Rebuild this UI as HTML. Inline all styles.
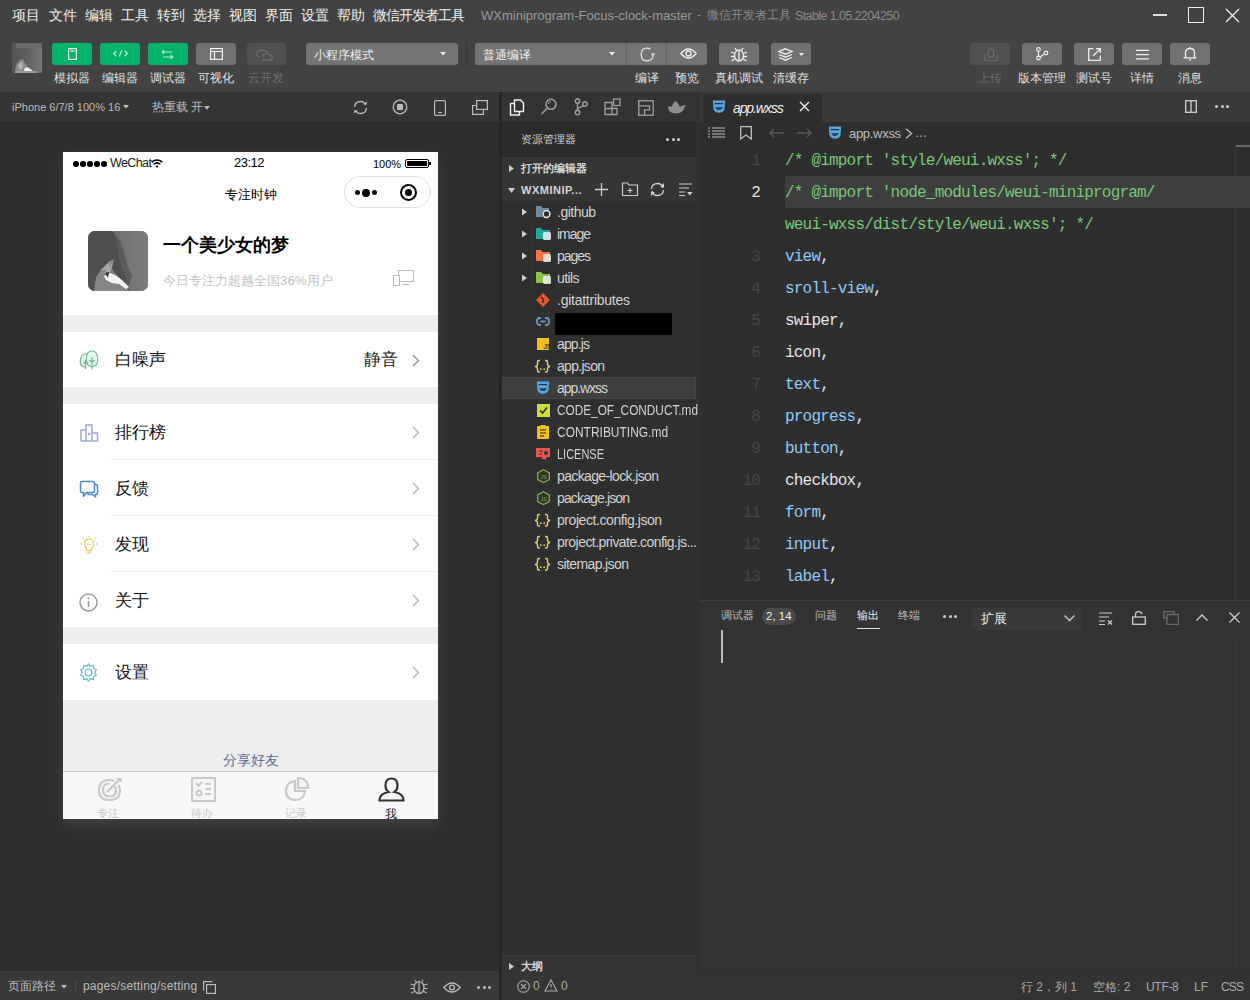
<!DOCTYPE html>
<html><head><meta charset="utf-8">
<style>
*{box-sizing:border-box;margin:0;padding:0}
html,body{width:1250px;height:1000px;overflow:hidden;background:#2f2f2f;font-family:"Liberation Sans",sans-serif}
.a{position:absolute}
.t{position:absolute;white-space:nowrap;line-height:1}
svg{position:absolute;overflow:visible}
#top{left:0;top:0;width:1250px;height:92px;background:#424242}
.menu{top:8px;font-size:14px;color:#f0f0f0}
.btn{top:43px;width:40px;height:22px;border-radius:3px}
.g{background:#04b36a}
.gr{background:#717171}
.dis{background:#505050}
.lbl{top:72px;font-size:12px;color:#e0e0e0;text-align:center;width:60px}
#simbar{left:0;top:92px;width:500px;height:30px;background:#353535}
#sim{left:0;top:122px;width:500px;height:849px;background:#2e2e2e;border-top:2px solid #2a2a2a}
#simstat{left:0;top:971px;width:500px;height:29px;background:#393939}
#divider{left:499px;top:92px;width:3px;height:909px;background:#262626}
#act{left:502px;top:92px;width:198px;height:29px;background:#333}
#exp{left:502px;top:121px;width:198px;height:849px;background:#2f2f2f}
#tabs{left:700px;top:92px;width:550px;height:30px;background:#393939}
#editor{left:700px;top:122px;width:550px;height:478px;background:#2e2e2e}
#panel{left:700px;top:600px;width:550px;height:370px;background:#333}
#stat{left:502px;top:971px;width:748px;height:29px;background:#333}
.phone{left:63px;top:152px;width:375px;height:667px;background:#fff;overflow:hidden;box-shadow:0 6px 14px rgba(85,85,85,0.5)}
</style></head><body>
<div id="top" class="a"></div>
<!-- menu -->
<div class="t menu" style="left:12px">项目</div>
<div class="t menu" style="left:49px">文件</div>
<div class="t menu" style="left:85px">编辑</div>
<div class="t menu" style="left:121px">工具</div>
<div class="t menu" style="left:157px">转到</div>
<div class="t menu" style="left:193px">选择</div>
<div class="t menu" style="left:229px">视图</div>
<div class="t menu" style="left:265px">界面</div>
<div class="t menu" style="left:301px">设置</div>
<div class="t menu" style="left:337px">帮助</div>
<div class="t menu" style="left:373px;letter-spacing:-1px">微信开发者工具</div>
<div class="t" style="left:481px;top:9px;font-size:13px;color:#9a9a9a">WXminiprogram-Focus-clock-master</div>
<div class="t" style="left:697px;top:9px;font-size:12px;color:#8a8a8a">-</div>
<div class="t" style="left:707px;top:9px;font-size:12px;color:#8a8a8a">微信开发者工具</div>
<div class="t" style="left:795px;top:10px;font-size:12.5px;letter-spacing:-0.6px;color:#8a8a8a">Stable 1.05.2204250</div>
<!-- window controls -->
<div class="a" style="left:1153px;top:14px;width:14px;height:1.5px;background:#ddd"></div>
<div class="a" style="left:1188px;top:7px;width:16px;height:16px;border:1.5px solid #eee"></div>
<svg style="left:1226px;top:9px" width="13" height="13"><path d="M0 0L13 13M13 0L0 13" stroke="#eee" stroke-width="1.3"/></svg>

<!-- toolbar -->
<div class="a" style="left:12px;top:43px;width:30px;height:30px;border-radius:2px;overflow:hidden;background:linear-gradient(90deg,#565656 0%,#5c5c5c 40%,#787878 100%)">
 <svg style="left:0;top:0;filter:blur(0.7px)" width="30" height="30"><rect x="4" y="0" width="26" height="5" fill="#6a6a6a"/><path d="M3 30L4 22L8 17L11 16L13 20L16 25L20 30Z" fill="#8a8a8a"/><path d="M6 22L10 18L11 24L8 27Z" fill="#b5b5b5"/><path d="M12 26L15 24L20 27L22 30H13Z" fill="#f0f0f0"/><path d="M3 28H25V30H3Z" fill="#9a9a9a"/></svg>
</div>
<div class="a btn g" style="left:52px"></div>
<div class="a btn g" style="left:100px"></div>
<div class="a btn g" style="left:148px"></div>
<div class="a btn gr" style="left:196px"></div>
<div class="a btn dis" style="left:247px;width:39px"></div>
<svg style="left:68px;top:48px" width="9" height="12"><rect x="0.6" y="0.6" width="7.8" height="10.8" fill="none" stroke="#eafff2" stroke-width="1.2"/><path d="M2.5 3H6.5" stroke="#eafff2" stroke-width="1.2"/></svg>
<svg style="left:113px;top:50px" width="15" height="7"><g fill="none" stroke="#bfe9d0" stroke-width="1.3"><path d="M3.2 0.8L0.8 3.5L3.2 6.2M11.8 0.8L14.2 3.5L11.8 6.2M8.8 0.4L6.2 6.6"/></g></svg>
<svg style="left:161px;top:50px" width="13" height="9"><g fill="none" stroke="#bfe9d0" stroke-width="1.2"><path d="M1.5 2H11M3.3 0.3L1.3 2L3.3 3.7"/><path d="M2 7H11.5M9.7 5.3L11.7 7L9.7 8.7"/></g></svg>
<svg style="left:210px;top:48px" width="13" height="12"><g fill="none" stroke="#f4f4f4" stroke-width="1.2"><rect x="0.6" y="0.6" width="11.8" height="10.8"/><path d="M0.6 3.5H12.4M4.5 3.5V11.4"/></g></svg>
<svg style="left:256px;top:49px" width="17" height="12"><g fill="none" stroke="#6a6a6a" stroke-width="1.3"><path d="M4 8Q0.7 8 0.7 5Q0.7 1 5 1.5Q7 0.3 9 2Q12 2 12 5"/><path d="M6 11H14Q16.3 11 16.3 8.5Q16.3 6 13.5 6Q12 4 9.5 5Q7 5 7 8"/></g></svg>
<div class="t lbl" style="left:42px">模拟器</div>
<div class="t lbl" style="left:90px">编辑器</div>
<div class="t lbl" style="left:138px">调试器</div>
<div class="t lbl" style="left:186px">可视化</div>
<div class="t lbl" style="left:236px;color:#6e6e6e">云开发</div>

<div class="a" style="left:306px;top:43px;width:152px;height:22px;background:#747474;border-radius:3px"></div>
<div class="t" style="left:314px;top:49px;font-size:12px;color:#f0f0f0">小程序模式</div>
<svg style="left:440px;top:52px" width="6" height="4"><path d="M0 0H6L3 3.5Z" fill="#eee"/></svg>
<div class="a" style="left:466px;top:43px;width:1px;height:22px;background:#353535"></div>
<div class="a" style="left:475px;top:43px;width:232px;height:22px;background:#747474;border-radius:3px"></div>
<div class="a" style="left:626px;top:43px;width:1px;height:22px;background:#646464"></div>
<div class="a" style="left:666px;top:43px;width:1px;height:22px;background:#646464"></div>
<div class="t" style="left:483px;top:49px;font-size:12px;color:#f0f0f0">普通编译</div>
<svg style="left:609px;top:52px" width="6" height="4"><path d="M0 0H6L3 3.5Z" fill="#eee"/></svg>
<svg style="left:640px;top:47px" width="16" height="15"><path d="M10.5 2.2Q9 1.2 7 1.2Q1.2 1.2 1.2 7.5Q1.2 13.8 7 13.8Q12.5 13.8 13 8.5" fill="none" stroke="#dcdcdc" stroke-width="1.4"/><path d="M10.5 6.5L13 9.5L15.5 6.5Z" fill="#dcdcdc"/></svg>
<svg style="left:680px;top:48px" width="17" height="11"><g fill="none" stroke="#f0f0f0" stroke-width="1.3"><path d="M0.8 5.5Q8.5 -3.5 16.2 5.5Q8.5 14.5 0.8 5.5Z"/><circle cx="8.5" cy="5.5" r="2.5"/></g></svg>
<div class="a btn gr" style="left:719px;width:40px"></div>
<div class="a btn gr" style="left:771px;width:40px"></div>
<svg style="left:730px;top:47px" width="18" height="15"><g fill="none" stroke="#f0f0f0" stroke-width="1.3"><ellipse cx="9" cy="8.5" rx="4.5" ry="5.5"/><path d="M9 4V14M6.5 3.5L5 1M11.5 3.5L13 1M4.5 6.5L1 5M13.5 6.5L17 5M4.5 9.5H1M13.5 9.5H17M4.8 12L1.5 14M13.2 12L16.5 14"/></g></svg>
<svg style="left:778px;top:48px" width="27" height="13"><g fill="none" stroke="#f0f0f0" stroke-width="1.3"><path d="M7.5 0.8L14 3.5L7.5 6.2L1 3.5Z"/><path d="M1 6.5L7.5 9.2L14 6.5M1 9.5L7.5 12.2L14 9.5"/></g><path d="M21 5H26L23.5 8Z" fill="#f0f0f0"/></svg>
<div class="t lbl" style="left:617px">编译</div>
<div class="t lbl" style="left:657px">预览</div>
<div class="t lbl" style="left:709px">真机调试</div>
<div class="t lbl" style="left:761px">清缓存</div>

<div class="a btn dis" style="left:970px"></div>
<div class="a btn gr" style="left:1022px"></div>
<div class="a btn gr" style="left:1074px"></div>
<div class="a btn gr" style="left:1122px"></div>
<div class="a btn gr" style="left:1170px"></div>
<svg style="left:984px;top:48px" width="14" height="13"><g fill="none" stroke="#6a6a6a" stroke-width="1.3"><path d="M4.5 3.5Q4.5 0.8 7 0.8Q9.5 0.8 9.5 3.5V9H4.5Z"/><path d="M0.7 7V12.3H13.3V7"/></g></svg>
<svg style="left:1036px;top:47px" width="13" height="14"><g fill="none" stroke="#f0f0f0" stroke-width="1.2"><circle cx="2.5" cy="2.5" r="1.8"/><circle cx="2.5" cy="11" r="1.8"/><circle cx="10" cy="6" r="1.8"/><path d="M2.5 4.3V9.2M4.2 10L8.3 7"/></g></svg>
<svg style="left:1088px;top:48px" width="13" height="13"><g fill="none" stroke="#f0f0f0" stroke-width="1.3"><path d="M5.5 0.7H0.7V12.3H12.3V7.5"/><path d="M5 8L12 1M8 0.7H12.3V5"/></g></svg>
<svg style="left:1136px;top:49px" width="13" height="11"><g stroke="#f0f0f0" stroke-width="1.3"><path d="M0 1.4H13M0 5.6H13M0 9.8H13"/></g></svg>
<svg style="left:1183px;top:46px" width="14" height="15"><g fill="none" stroke="#f0f0f0" stroke-width="1.3"><path d="M7 1V2.5M2.5 11.5V7Q2.5 2.5 7 2.5Q11.5 2.5 11.5 7V11.5M0.5 11.8H13.5M5.8 13.8H8.2"/></g></svg>
<div class="t lbl" style="left:960px;color:#6e6e6e">上传</div>
<div class="t lbl" style="left:1012px">版本管理</div>
<div class="t lbl" style="left:1064px">测试号</div>
<div class="t lbl" style="left:1112px">详情</div>
<div class="t lbl" style="left:1160px">消息</div>

<!-- simulator -->
<div id="simbar" class="a"></div>
<div id="sim" class="a"></div>
<div id="simstat" class="a"></div>
<div class="t" style="left:12px;top:102px;font-size:11px;color:#bdbdbd">iPhone 6/7/8 100% 16</div>
<svg style="left:123px;top:105px" width="6" height="4"><path d="M0 0H6L3 3.5Z" fill="#bdbdbd"/></svg>
<div class="t" style="left:152px;top:101px;font-size:12px;color:#bdbdbd">热重载 开</div>
<svg style="left:204px;top:106px" width="6" height="4"><path d="M0 0H6L3 3.5Z" fill="#bdbdbd"/></svg>
<svg style="left:353px;top:100px" width="15" height="15"><g fill="none" stroke="#bbb" stroke-width="1.3"><path d="M12.5 5Q11 1.5 7.5 1.5Q2 1.5 1.6 7"/><path d="M2.5 10Q4 13.5 7.5 13.5Q13 13.5 13.4 8"/></g><path d="M10.5 4.5H13.8V1.2Z M4.5 10.5H1.2V13.8Z" fill="#bbb"/></svg>
<svg style="left:392px;top:99px" width="16" height="16"><circle cx="8" cy="8" r="6.8" fill="none" stroke="#bbb" stroke-width="1.3"/><rect x="5" y="5" width="6" height="6" rx="1" fill="#bbb"/></svg>
<svg style="left:434px;top:100px" width="12" height="16"><g fill="none" stroke="#bbb" stroke-width="1.2"><rect x="0.6" y="0.6" width="10.8" height="14.8" rx="1"/><path d="M4 12.5H8"/></g></svg>
<svg style="left:472px;top:100px" width="16" height="15"><g fill="none" stroke="#bbb" stroke-width="1.2"><rect x="4.6" y="0.6" width="10.8" height="8.8"/><path d="M4.6 5.5H0.6V14.4H11.4V9.4"/></g></svg>

<div class="a phone">
 <!-- status bar -->
 <div class="a" style="left:10px;top:9px;width:5.5px;height:5.5px;border-radius:50%;background:#000"></div>
 <div class="a" style="left:17px;top:9px;width:5.5px;height:5.5px;border-radius:50%;background:#000"></div>
 <div class="a" style="left:24px;top:9px;width:5.5px;height:5.5px;border-radius:50%;background:#000"></div>
 <div class="a" style="left:31px;top:9px;width:5.5px;height:5.5px;border-radius:50%;background:#000"></div>
 <div class="a" style="left:38px;top:9px;width:5.5px;height:5.5px;border-radius:50%;background:#000"></div>
 <div class="t" style="left:47px;top:5px;font-size:12.5px;letter-spacing:-0.6px;color:#222">WeChat</div>
 <svg style="left:88px;top:7px" width="12" height="9"><path d="M0.6 3.2Q6 -1.2 11.4 3.2" stroke="#000" stroke-width="1.5" fill="none"/><path d="M2.6 5.3Q6 2.4 9.4 5.3" stroke="#000" stroke-width="1.5" fill="none"/><path d="M4.4 7L6 8.8L7.6 7Q6 5.8 4.4 7Z" fill="#000"/></svg>
 <div class="t" style="left:171px;top:4px;font-size:13px;letter-spacing:-0.5px;color:#000">23:12</div>
 <div class="t" style="left:310px;top:7px;font-size:11px;color:#000">100%</div>
 <div class="a" style="left:342px;top:7px;width:24px;height:9px;border:1px solid #000;border-radius:2px;padding:1px"><div style="width:100%;height:100%;background:#000"></div></div>
 <div class="a" style="left:366px;top:10px;width:2px;height:3px;background:#000"></div>
 <!-- nav -->
 <div class="t" style="left:0;width:375px;text-align:center;top:36px;font-size:13px;color:#000">专注时钟</div>
 <div class="a" style="left:281px;top:24px;width:87px;height:32px;border:1px solid #e0e0e0;border-radius:16px"></div>
 <div class="a" style="left:291.5px;top:38.2px;width:5px;height:5px;border-radius:50%;background:#000"></div>
 <div class="a" style="left:298.5px;top:36.7px;width:8px;height:8px;border-radius:50%;background:#000"></div>
 <div class="a" style="left:309px;top:38.2px;width:5px;height:5px;border-radius:50%;background:#000"></div>
 <div class="a" style="left:337px;top:32px;width:17px;height:17px;border-radius:50%;border:2px solid #000"></div>
 <div class="a" style="left:342px;top:37px;width:7px;height:7px;border-radius:50%;background:#000"></div>
 <!-- profile -->
 <div class="a" style="left:25px;top:79px;width:60px;height:60px;border-radius:7px;overflow:hidden;background:#707070">
  <svg style="left:0;top:0;filter:blur(0.6px)" width="60" height="60">
   <defs><linearGradient id="av1" x1="0" y1="0" x2="1" y2="0"><stop offset="0" stop-color="#666"/><stop offset="1" stop-color="#7c7c7c"/></linearGradient></defs>
   <rect width="60" height="60" fill="url(#av1)"/>
   <path d="M0 0H24Q30 6 31 18Q33 30 38 40Q42 50 40 60H0Z" fill="#4f4f4f"/>
   <path d="M24 0Q34 8 36 20Q38 34 44 44L40 60H38Q40 48 34 38Q30 28 30 16Q28 6 24 0Z" fill="#5c5c5c"/>
   <path d="M6 60L8 46L14 38L22 30L26 28L24 38L30 46L40 58V60Z" fill="#868686"/>
   <path d="M12 40L22 30L20 38Z M16 42L25 31L22 41Z" fill="#a8a8a8"/>
   <path d="M16 45L22 42L29 45L35 50L41 56L38 58L31 53L24 52L18 49Z" fill="#f4f4f4"/>
   <path d="M17 42L21 41L20 47Z" fill="#333"/>
  </svg>
 </div>
 <div class="t" style="left:100px;top:84px;font-size:18px;font-weight:bold;color:#000">一个美少女的梦</div>
 <div class="t" style="left:100px;top:122px;font-size:13.3px;color:#c4c4c4">今日专注力超越全国36%用户</div>
 <svg style="left:330px;top:118px" width="21" height="16"><rect x="5.5" y="0.5" width="15" height="11" fill="none" stroke="#bbb"/><rect x="0.5" y="5.5" width="6" height="10" fill="#fff" stroke="#bbb"/><path d="M9 14.5H16" stroke="#bbb"/></svg>
 <!-- bands -->
 <div class="a" style="left:0;top:163px;width:375px;height:17px;background:#ededed"></div>
 <div class="a" style="left:0;top:235px;width:375px;height:17px;background:#ededed"></div>
 <div class="a" style="left:48px;top:307px;width:327px;height:1px;background:#f0f0f0"></div>
 <div class="a" style="left:48px;top:363px;width:327px;height:1px;background:#f0f0f0"></div>
 <div class="a" style="left:48px;top:419px;width:327px;height:1px;background:#f0f0f0"></div>
 <div class="a" style="left:0;top:475px;width:375px;height:17px;background:#ededed"></div>
 <div class="a" style="left:0;top:548px;width:375px;height:71px;background:#ededed"></div>
 <!-- rows -->
 <div class="t" style="left:52px;top:199px;font-size:17px;color:#111">白噪声</div>
 <div class="t" style="left:301px;top:199px;font-size:17px;color:#222">静音</div>
 <div class="t" style="left:52px;top:272px;font-size:17px;color:#111">排行榜</div>
 <div class="t" style="left:52px;top:328px;font-size:17px;color:#111">反馈</div>
 <div class="t" style="left:52px;top:384px;font-size:17px;color:#111">发现</div>
 <div class="t" style="left:52px;top:440px;font-size:17px;color:#111">关于</div>
 <div class="t" style="left:52px;top:512px;font-size:17px;color:#111">设置</div>
 <svg style="left:349px;top:202px" width="8" height="13"><path d="M1 1L6.5 6.5L1 12" stroke="#a0a0a0" stroke-width="1.6" fill="none"/></svg>
 <svg style="left:349px;top:274px" width="8" height="13"><path d="M1 1L6.5 6.5L1 12" stroke="#bdbdbd" stroke-width="1.6" fill="none"/></svg>
 <svg style="left:349px;top:330px" width="8" height="13"><path d="M1 1L6.5 6.5L1 12" stroke="#bdbdbd" stroke-width="1.6" fill="none"/></svg>
 <svg style="left:349px;top:386px" width="8" height="13"><path d="M1 1L6.5 6.5L1 12" stroke="#bdbdbd" stroke-width="1.6" fill="none"/></svg>
 <svg style="left:349px;top:442px" width="8" height="13"><path d="M1 1L6.5 6.5L1 12" stroke="#bdbdbd" stroke-width="1.6" fill="none"/></svg>
 <svg style="left:349px;top:514px" width="8" height="13"><path d="M1 1L6.5 6.5L1 12" stroke="#bdbdbd" stroke-width="1.6" fill="none"/></svg>
 <!-- icons -->
 <svg style="left:16px;top:198px" width="20" height="20"><g stroke="#74b596" stroke-width="1.2"><path d="M6.5 17Q1 17 1.3 11Q1.8 4 6.5 4Q9 4 10 7" fill="#e3f8ee"/><path d="M13 16.5Q19 16.5 18.8 9Q18.5 1 13 1Q7.5 1 7.3 9Q7.2 16.5 13 16.5Z" fill="#e3f8ee"/><path d="M6.5 19V10M4.5 12L6.5 14L8.5 12M13 19V7M10.5 10L13 12.5L15.5 10" fill="none"/></g></svg>
 <svg style="left:17px;top:272px" width="19" height="18"><g fill="none" stroke="#9ea6d9" stroke-width="1.5"><path d="M1 17V6H6V17M6 17V1H12V17M12 17V9H17.5V17H1"/><circle cx="9" cy="10" r="0.6" fill="#9ea6d9"/></g></svg>
 <svg style="left:16px;top:328px" width="21" height="19"><g fill="none" stroke="#4a8bd6" stroke-width="1.5" stroke-linejoin="round"><path d="M1.5 3Q1.5 1.5 3 1.5H14Q15.5 1.5 15.5 3V11Q15.5 12.5 14 12.5H7.5L4.5 16.2V12.5H3Q1.5 12.5 1.5 11Z"/><path d="M15.5 4.5H17Q18.5 4.5 18.5 6V13Q18.5 14.5 17 14.5H16.5V17L13.5 14.5H9V12.5"/></g></svg>
 <svg style="left:17px;top:383px" width="18" height="19"><g fill="none" stroke="#f2cf62" stroke-width="1.3"><path d="M9 4Q13.5 4 13.5 9Q13.5 11.5 11.5 13.3V15.5H6.5V13.3Q4.5 11.5 4.5 9Q4.5 4 9 4Z"/><path d="M6.8 17.8H11.2M9 0.5V2M2.5 3L3.6 4.1M15.5 3L14.4 4.1M0.5 9H2M16 9H17.5"/><path d="M7 9.5Q8 8.2 9 9.5Q10 8.2 11 9.5" stroke-width="1"/></g></svg>
 <svg style="left:16px;top:441px" width="19" height="19"><g fill="none" stroke="#999" stroke-width="1.5"><circle cx="9.5" cy="9.5" r="8.5"/><path d="M9.5 8V14"/></g><circle cx="9.5" cy="5.3" r="1" fill="#999"/></svg>
 <svg style="left:16px;top:511px" width="19" height="19"><g fill="none" stroke="#6bbde9" stroke-width="1.3"><path d="M9.5 1L11.3 3.2L14.2 2.6L14.6 5.4L17.2 6.8L15.8 9.5L17.2 12.2L14.6 13.6L14.2 16.4L11.3 15.8L9.5 18L7.7 15.8L4.8 16.4L4.4 13.6L1.8 12.2L3.2 9.5L1.8 6.8L4.4 5.4L4.8 2.6L7.7 3.2Z"/><circle cx="9.5" cy="9.5" r="3.3"/></g></svg>
 <!-- share -->
 <div class="t" style="left:0;width:375px;text-align:center;top:601px;font-size:14px;color:#5d6b93">分享好友</div>
 <!-- tab bar -->
 <div class="a" style="left:0;top:619px;width:375px;height:47px;background:#f7f7f7;border-top:1px solid #c8c8c8"></div>
 <svg style="left:34px;top:625px" width="26" height="25"><g fill="none" stroke="#c9c9c9" stroke-width="2.2"><path d="M21.5 8Q23 10.5 23 13Q23 23 12.5 23Q2 23 2 13Q2 3 12.5 3Q15 3 17 4"/><path d="M17.5 9.5Q19 11 19 13Q19 19.5 12.5 19.5Q6 19.5 6 13Q6 6.5 12.5 6.5"/><path d="M10 15L22 3"/></g><path d="M19 1L25 1L24 6Z" fill="#c9c9c9"/></svg>
 <svg style="left:128px;top:625px" width="25" height="25"><g fill="none" stroke="#c9c9c9" stroke-width="2"><rect x="1" y="1" width="23" height="23"/><path d="M5 6L7.5 9L11 5M14 7H20M14 12H20M14 17H20"/><circle cx="8" cy="16" r="2.5"/></g></svg>
 <svg style="left:221px;top:625px" width="25" height="25"><g fill="none" stroke="#c9c9c9" stroke-width="2.2"><path d="M11 4Q2 5 2 14Q2 23 12 23Q20 23 21 14H11Z"/><path d="M14 1V11H24Q24 1 14 1Z"/></g></svg>
 <svg style="left:315px;top:625px" width="27" height="25"><g fill="none" stroke="#333" stroke-width="2.2"><path d="M13.5 1.5Q19.5 1.5 19.5 8.5Q19.5 13 16.5 15Q25 16.5 25.5 22.5V23.5H1.5V22.5Q2 16.5 10.5 15Q7.5 13 7.5 8.5Q7.5 1.5 13.5 1.5Z"/></g></svg>
 <div class="t" style="left:34px;top:656px;font-size:11px;color:#c9c9c9">专注</div>
 <div class="t" style="left:128px;top:656px;font-size:11px;color:#c9c9c9">待办</div>
 <div class="t" style="left:222px;top:656px;font-size:11px;color:#c9c9c9">记录</div>
</div>
<div class="t" style="left:385px;top:808px;font-size:12px;color:#111">我</div>

<div class="t" style="left:8px;top:980px;font-size:12px;color:#bdbdbd">页面路径</div>
<svg style="left:61px;top:985px" width="6" height="4"><path d="M0 0H6L3 3.5Z" fill="#bdbdbd"/></svg>
<div class="a" style="left:75px;top:980px;width:1px;height:12px;background:#4a4a4a"></div>
<div class="t" style="left:83px;top:980px;font-size:12px;letter-spacing:0.2px;color:#bdbdbd">pages/setting/setting</div>
<svg style="left:203px;top:981px" width="13" height="13"><g fill="none" stroke="#bdbdbd" stroke-width="1.2"><rect x="3.6" y="3.6" width="8.8" height="8.8"/><path d="M0.6 9.5V0.6H9.5"/></g></svg>
<svg style="left:409px;top:979px" width="20" height="16"><g fill="none" stroke="#bbb" stroke-width="1.2"><ellipse cx="10" cy="8.5" rx="5" ry="6"/><path d="M10 3V14.5M7 2.5L6 1M13 2.5L14 1M5 6L1.5 5M15 6L18.5 5M5 9.5H1.5M15 9.5H18.5M5.5 12.5L2 14M14.5 12.5L18 14"/></g></svg>
<svg style="left:443px;top:982px" width="18" height="11"><g fill="none" stroke="#bbb" stroke-width="1.3"><path d="M0.8 5.5Q9 -3.5 17.2 5.5Q9 14.5 0.8 5.5Z"/><circle cx="9" cy="5.5" r="2.4"/></g></svg>
<div class="a" style="left:477px;top:986px;width:3px;height:3px;border-radius:50%;background:#bbb"></div>
<div class="a" style="left:482.5px;top:986px;width:3px;height:3px;border-radius:50%;background:#bbb"></div>
<div class="a" style="left:488px;top:986px;width:3px;height:3px;border-radius:50%;background:#bbb"></div>

<!-- editor side -->
<div id="divider" class="a"></div>
<div id="act" class="a"></div>
<div id="exp" class="a"></div>
<!-- activity icons -->
<svg style="left:509px;top:99px" width="16" height="17"><g fill="none" stroke="#f2f2f2" stroke-width="1.4"><path d="M5.5 1H11.5L14.5 4V12.5H5.5Z"/><path d="M5.5 4.5H1.5V16H10.5V12.5"/></g></svg>
<svg style="left:540px;top:98px" width="18" height="18"><g fill="none" stroke="#a0a0a0" stroke-width="1.6"><circle cx="11" cy="6.3" r="5"/><path d="M7.5 10L1.5 16"/></g><path d="M11 3.5A3 3 0 0 0 8.3 6" fill="none" stroke="#a0a0a0" stroke-width="1"/></svg>
<svg style="left:573px;top:98px" width="16" height="18"><g fill="none" stroke="#a0a0a0" stroke-width="1.4"><circle cx="4.5" cy="3" r="2.2"/><circle cx="4.5" cy="14.5" r="2.2"/><circle cx="12" cy="6" r="2.2"/><path d="M4.5 5.2V12.3M10.5 7.6L5 10.5"/></g></svg>
<svg style="left:604px;top:98px" width="17" height="18"><g fill="none" stroke="#a0a0a0" stroke-width="1.3"><path d="M1 4.5H8V10.5H13V16.5H1Z M1 10.5H8V16.5"/><rect x="9.5" y="1" width="6.5" height="6.5"/></g></svg>
<svg style="left:638px;top:100px" width="16" height="16"><g fill="none" stroke="#a0a0a0" stroke-width="1.3"><rect x="0.8" y="0.8" width="14.4" height="14.4"/><path d="M0.8 5.8H11.5V9.8H6.5V15.2"/></g></svg>
<svg style="left:667px;top:99px" width="19" height="15"><path d="M1 8Q1.5 14.5 9 14.5Q16 14.5 17.5 8L19 6.5L16.5 6Q15 7.5 12.5 7.5Q12 5 10.5 4Q9 1 7 3.5Q5.5 5 5 7.5H1Z" fill="#8e8e8e"/></svg>
<div class="a" style="left:502px;top:121px;width:194px;height:36px;background:#2b2b2b"></div>
<div class="a" style="left:696px;top:121px;width:4px;height:849px;background:#313131"></div>
<div class="a" style="left:700px;top:121px;width:2px;height:849px;background:#2a2a2a"></div>
<div class="t" style="left:521px;top:134px;font-size:11px;color:#cfcfcf">资源管理器</div>
<div class="a" style="left:666.0px;top:138px;width:3px;height:3px;border-radius:50%;background:#d0d0d0"></div><div class="a" style="left:671.5px;top:138px;width:3px;height:3px;border-radius:50%;background:#d0d0d0"></div><div class="a" style="left:677.0px;top:138px;width:3px;height:3px;border-radius:50%;background:#d0d0d0"></div>
<div class="a" style="left:502px;top:156px;width:194px;height:45px;background:#353535;border-top:1px solid #2a2a2a"></div>
<svg style="left:509px;top:165px" width="5" height="7"><path d="M0 0L5 3.5L0 7Z" fill="#cfcfcf"/></svg>
<div class="t" style="left:521px;top:163px;font-size:11px;color:#d6d6d6;font-weight:bold">打开的编辑器</div>
<svg style="left:508px;top:188px" width="7" height="5"><path d="M0 0H7L3.5 5Z" fill="#cfcfcf"/></svg>
<div class="t" style="left:521px;top:185px;font-size:11px;letter-spacing:0.5px;color:#d6d6d6;font-weight:bold">WXMINIP...</div>
<svg style="left:595px;top:183px" width="13" height="13"><path d="M6.5 0V13M0 6.5H13" stroke="#cfcfcf" stroke-width="1.3"/></svg>
<svg style="left:622px;top:182px" width="16" height="14"><g fill="none" stroke="#cfcfcf" stroke-width="1.2"><path d="M0.5 1H5.5L7 3H15.5V13.5H0.5Z"/><path d="M8 6V11M5.5 8.5H10.5"/></g></svg>
<svg style="left:650px;top:182px" width="15" height="15"><g fill="none" stroke="#cfcfcf" stroke-width="1.3"><path d="M13 6Q12 1.5 7.5 1.5Q2 1.5 1.5 7"/><path d="M2 9Q3 13.5 7.5 13.5Q13 13.5 13.5 8"/></g><path d="M10 5H14V1Z M5 10H1V14Z" fill="#cfcfcf"/></svg>
<svg style="left:679px;top:183px" width="14" height="13"><g stroke="#cfcfcf" stroke-width="1.2"><path d="M0 1H13M0 5H10M0 9H6M0 12.5H6"/></g><path d="M8 9L13.5 9L10.8 12.5Z" fill="#cfcfcf"/></svg>
<!-- tree -->
<div class="a" style="left:502px;top:377px;width:194px;height:22px;background:#3e3e3e;border:1px solid #454545"></div>
<div class="a" style="left:531px;top:223px;width:1px;height:66px;background:#3a3a3a"></div>
<svg style="left:522px;top:208px" width="5" height="8"><path d="M0 0.5L5 4L0 7.5Z" fill="#cfcfcf"/></svg>
<svg style="left:536px;top:206px" width="16" height="13"><path d="M0 0H5L6.5 2H13V11H0Z" fill="#6d8ba5"/><circle cx="10.5" cy="8" r="4.5" fill="#2f2f2f"/><circle cx="10.5" cy="8" r="3.4" fill="none" stroke="#e8eef2" stroke-width="1.5"/></svg>
<div class="t" style="left:557px;top:205px;font-size:14px;letter-spacing:-0.50px;color:#d4d4d4">.github</div>
<svg style="left:522px;top:230px" width="5" height="8"><path d="M0 0.5L5 4L0 7.5Z" fill="#cfcfcf"/></svg>
<svg style="left:536px;top:228px" width="15" height="12"><path d="M0 0H5L6.5 2H14V11H0Z" fill="#26a69a"/><rect x="7" y="4" width="8" height="8" rx="1.5" fill="#e8f0f0" opacity="0.85"/></svg>
<div class="t" style="left:557px;top:227px;font-size:14px;letter-spacing:-1.03px;color:#d4d4d4">image</div>
<svg style="left:522px;top:252px" width="5" height="8"><path d="M0 0.5L5 4L0 7.5Z" fill="#cfcfcf"/></svg>
<svg style="left:536px;top:250px" width="15" height="12"><path d="M0 0H5L6.5 2H14V11H0Z" fill="#f4714a"/><rect x="7" y="4" width="8" height="8" rx="1.5" fill="#e8f0f0" opacity="0.85"/></svg>
<div class="t" style="left:557px;top:249px;font-size:14px;letter-spacing:-1.03px;color:#d4d4d4">pages</div>
<svg style="left:522px;top:274px" width="5" height="8"><path d="M0 0.5L5 4L0 7.5Z" fill="#cfcfcf"/></svg>
<svg style="left:536px;top:272px" width="15" height="12"><path d="M0 0H5L6.5 2H14V11H0Z" fill="#8bc34a"/><rect x="7" y="4" width="8" height="8" rx="1.5" fill="#e8f0f0" opacity="0.85"/></svg>
<div class="t" style="left:557px;top:271px;font-size:14px;letter-spacing:-0.60px;color:#d4d4d4">utils</div>
<svg style="left:536px;top:293px" width="14" height="14"><path d="M7 0L14 7L7 14L0 7Z" fill="#e8552e"/><path d="M5 4L8 7M7 7V10" stroke="#2f2f2f" stroke-width="1.5"/></svg>
<div class="t" style="left:557px;top:293px;font-size:14px;letter-spacing:-0.25px;color:#d4d4d4">.gitattributes</div>
<svg style="left:536px;top:317px" width="14" height="9"><g fill="none" stroke="#6f93b8" stroke-width="1.8"><path d="M5 1H3.5Q1 1 1 4.5Q1 8 3.5 8H5M9 1H10.5Q13 1 13 4.5Q13 8 10.5 8H9M4.5 4.5H9.5"/></g></svg>
<div class="a" style="left:555px;top:313px;width:117px;height:22px;background:#000"></div>
<svg style="left:537px;top:338px" width="12" height="12"><rect width="12" height="12" fill="#f1c21b"/><text x="6.5" y="10.5" font-size="6.5" font-family="Liberation Sans" font-weight="bold" fill="#3a3000">JS</text></svg>
<div class="t" style="left:557px;top:337px;font-size:14px;letter-spacing:-0.88px;color:#d4d4d4">app.js</div>
<svg style="left:534px;top:359px" width="17" height="14"><g fill="none" stroke="#e6cf6e" stroke-width="1.4"><path d="M6 1.5H4.8Q3.5 1.5 3.5 3V5.5Q3.5 7 1 7.5Q3.5 8 3.5 9.5V11.5Q3.5 13 4.8 13H6"/><path d="M11 1.5H12.2Q13.5 1.5 13.5 3V5.5Q13.5 7 16 7.5Q13.5 8 13.5 9.5V11.5Q13.5 13 12.2 13H11"/></g><circle cx="6.8" cy="10.2" r="0.9" fill="#e6cf6e"/><circle cx="10.2" cy="10.2" r="0.9" fill="#e6cf6e"/></svg>
<div class="t" style="left:557px;top:359px;font-size:14px;letter-spacing:-0.70px;color:#d4d4d4">app.json</div>
<svg style="left:536px;top:381px" width="14" height="13"><path d="M0.8 0.5H13.2L12.6 8.5Q12 12.5 7 12.8Q2 12.5 1.4 8.5Z" fill="#5aa6dd"/><path d="M2.5 3.6H11.3" stroke="#1d3550" stroke-width="1.3"/><path d="M3.2 7.2Q7 7.6 10.8 6.8Q10 10 7 10Q4 10 3.2 7.2Z" fill="#1d3550" opacity="0.9"/></svg>
<div class="t" style="left:557px;top:381px;font-size:14px;letter-spacing:-1.06px;color:#d4d4d4">app.wxss</div>
<svg style="left:537px;top:403px" width="13" height="14"><rect y="1" width="13" height="13" fill="#cddc39"/><path d="M3 7.5L5.5 10L10 4.5" stroke="#2f2f2f" stroke-width="1.6" fill="none"/></svg>
<div class="t" style="left:557px;top:403px;font-size:14px;color:#d4d4d4;transform:scaleX(0.843);transform-origin:0 0">CODE_OF_CONDUCT.md</div>
<svg style="left:537px;top:425px" width="12" height="14"><rect y="1" width="12" height="13" rx="1" fill="#f1c21b"/><path d="M3 5H9M3 8H9M3 11H7" stroke="#2f2f2f" stroke-width="1.2"/><rect x="3.5" y="0" width="5" height="2.5" fill="#f1c21b"/></svg>
<div class="t" style="left:557px;top:425px;font-size:14px;color:#d4d4d4;transform:scaleX(0.855);transform-origin:0 0">CONTRIBUTING.md</div>
<svg style="left:536px;top:447px" width="15" height="14"><path d="M0 1H14V10H10V13L8 11.5L6 13V10H0Z" fill="#ef5350"/><path d="M3 4H7M3 7H6" stroke="#2f2f2f" stroke-width="1.2"/><circle cx="10" cy="6" r="2" fill="#2f2f2f"/></svg>
<div class="t" style="left:557px;top:447px;font-size:14px;color:#d4d4d4;transform:scaleX(0.785);transform-origin:0 0">LICENSE</div>
<svg style="left:537px;top:469px" width="13" height="14"><path d="M6.5 0.7L12.3 4V10.5L6.5 13.5L0.7 10.5V4Z" fill="none" stroke="#7cb342" stroke-width="1.3"/><text x="3.5" y="9.5" font-size="5.5" font-family="Liberation Sans" fill="#7cb342">JS</text></svg>
<div class="t" style="left:557px;top:469px;font-size:14px;letter-spacing:-0.63px;color:#d4d4d4">package-lock.json</div>
<svg style="left:537px;top:491px" width="13" height="14"><path d="M6.5 0.7L12.3 4V10.5L6.5 13.5L0.7 10.5V4Z" fill="none" stroke="#7cb342" stroke-width="1.3"/><text x="3.5" y="9.5" font-size="5.5" font-family="Liberation Sans" fill="#7cb342">JS</text></svg>
<div class="t" style="left:557px;top:491px;font-size:14px;letter-spacing:-0.86px;color:#d4d4d4">package.json</div>
<svg style="left:534px;top:513px" width="17" height="14"><g fill="none" stroke="#e6cf6e" stroke-width="1.4"><path d="M6 1.5H4.8Q3.5 1.5 3.5 3V5.5Q3.5 7 1 7.5Q3.5 8 3.5 9.5V11.5Q3.5 13 4.8 13H6"/><path d="M11 1.5H12.2Q13.5 1.5 13.5 3V5.5Q13.5 7 16 7.5Q13.5 8 13.5 9.5V11.5Q13.5 13 12.2 13H11"/></g><circle cx="6.8" cy="10.2" r="0.9" fill="#e6cf6e"/><circle cx="10.2" cy="10.2" r="0.9" fill="#e6cf6e"/></svg>
<div class="t" style="left:557px;top:513px;font-size:14px;letter-spacing:-0.43px;color:#d4d4d4">project.config.json</div>
<svg style="left:534px;top:535px" width="17" height="14"><g fill="none" stroke="#e6cf6e" stroke-width="1.4"><path d="M6 1.5H4.8Q3.5 1.5 3.5 3V5.5Q3.5 7 1 7.5Q3.5 8 3.5 9.5V11.5Q3.5 13 4.8 13H6"/><path d="M11 1.5H12.2Q13.5 1.5 13.5 3V5.5Q13.5 7 16 7.5Q13.5 8 13.5 9.5V11.5Q13.5 13 12.2 13H11"/></g><circle cx="6.8" cy="10.2" r="0.9" fill="#e6cf6e"/><circle cx="10.2" cy="10.2" r="0.9" fill="#e6cf6e"/></svg>
<div class="t" style="left:557px;top:535px;font-size:14px;letter-spacing:-0.55px;color:#d4d4d4">project.private.config.js...</div>
<svg style="left:534px;top:557px" width="17" height="14"><g fill="none" stroke="#e6cf6e" stroke-width="1.4"><path d="M6 1.5H4.8Q3.5 1.5 3.5 3V5.5Q3.5 7 1 7.5Q3.5 8 3.5 9.5V11.5Q3.5 13 4.8 13H6"/><path d="M11 1.5H12.2Q13.5 1.5 13.5 3V5.5Q13.5 7 16 7.5Q13.5 8 13.5 9.5V11.5Q13.5 13 12.2 13H11"/></g><circle cx="6.8" cy="10.2" r="0.9" fill="#e6cf6e"/><circle cx="10.2" cy="10.2" r="0.9" fill="#e6cf6e"/></svg>
<div class="t" style="left:557px;top:557px;font-size:14px;letter-spacing:-0.60px;color:#d4d4d4">sitemap.json</div>
<div id="tabs" class="a"></div>
<div id="editor" class="a"></div>
<!-- tab -->
<div class="a" style="left:703px;top:94px;width:119px;height:28px;background:#2e2e2e"></div>
<svg style="left:712px;top:100px" width="14" height="13"><path d="M0.8 0.5H13.2L12.6 8.5Q12 12.5 7 12.8Q2 12.5 1.4 8.5Z" fill="#5aa6dd"/><path d="M2.5 3.6H11.3" stroke="#1d3550" stroke-width="1.3"/><path d="M3.2 7.2Q7 7.6 10.8 6.8Q10 10 7 10Q4 10 3.2 7.2Z" fill="#1d3550" opacity="0.9"/></svg>
<div class="t" style="left:733px;top:101px;font-size:14px;font-style:italic;color:#f0f0f0;letter-spacing:-1.1px">app.wxss</div>
<svg style="left:800px;top:102px" width="9" height="9"><path d="M0 0L9 9M9 0L0 9" stroke="#f0f0f0" stroke-width="1.4"/></svg>
<svg style="left:1185px;top:100px" width="12" height="13"><g fill="none" stroke="#cfcfcf" stroke-width="1.3"><rect x="0.7" y="0.7" width="10.6" height="11.6"/><path d="M6 0.7V12.3"/></g></svg>
<div class="a" style="left:1215.0px;top:105px;width:3px;height:3px;border-radius:50%;background:#cfcfcf"></div><div class="a" style="left:1220.5px;top:105px;width:3px;height:3px;border-radius:50%;background:#cfcfcf"></div><div class="a" style="left:1226.0px;top:105px;width:3px;height:3px;border-radius:50%;background:#cfcfcf"></div>
<!-- breadcrumbs -->
<svg style="left:708px;top:127px" width="17" height="11"><g stroke="#bdbdbd" stroke-width="1.2"><path d="M0 1H2M4 1H17M0 4H2M4 4H17M0 7H2M4 7H17M0 10H2M4 10H17"/></g></svg>
<svg style="left:740px;top:126px" width="12" height="14"><path d="M0.7 0.7H11.3V13L6 9L0.7 13Z" fill="none" stroke="#bdbdbd" stroke-width="1.3"/></svg>
<svg style="left:769px;top:128px" width="15" height="10"><path d="M15 5H1M5 1L1 5L5 9" fill="none" stroke="#5a5a5a" stroke-width="1.3"/></svg>
<svg style="left:797px;top:128px" width="15" height="10"><path d="M0 5H14M10 1L14 5L10 9" fill="none" stroke="#5a5a5a" stroke-width="1.3"/></svg>
<svg style="left:828px;top:126px" width="14" height="13"><path d="M0.8 0.5H13.2L12.6 8.5Q12 12.5 7 12.8Q2 12.5 1.4 8.5Z" fill="#5aa6dd"/><path d="M2.5 3.6H11.3" stroke="#1d3550" stroke-width="1.3"/><path d="M3.2 7.2Q7 7.6 10.8 6.8Q10 10 7 10Q4 10 3.2 7.2Z" fill="#1d3550" opacity="0.9"/></svg>
<div class="t" style="left:849px;top:127px;font-size:13px;color:#bdbdbd;letter-spacing:-0.3px">app.wxss</div>
<svg style="left:905px;top:128px" width="8" height="11"><path d="M1 0.8L6.5 5.5L1 10.2" fill="none" stroke="#bdbdbd" stroke-width="1.3"/></svg>
<div class="t" style="left:915px;top:127px;font-size:12px;color:#bdbdbd">…</div>
<!-- current line -->
<div class="a" style="left:785px;top:176px;width:465px;height:32px;background:#3e3e3e"></div>
<div class="a" style="left:1236px;top:145px;width:14px;height:2px;background:#6a6a6a"></div>
<div class="a" style="left:1235px;top:145px;width:1px;height:455px;background:#3c3c3c"></div>
<div class="t" style="left:720px;width:40px;text-align:right;top:153px;font-size:16px;letter-spacing:-0.8px;font-family:'Liberation Mono';color:#464646">1</div>
<div class="t" style="left:785px;top:153px;font-size:16px;letter-spacing:-0.8px;font-family:'Liberation Mono'"><span style="color:#78c878">/* @import 'style/weui.wxss'; */</span></div>
<div class="t" style="left:720px;width:40px;text-align:right;top:185px;font-size:16px;letter-spacing:-0.8px;font-family:'Liberation Mono';color:#e0e0e0">2</div>
<div class="t" style="left:785px;top:185px;font-size:16px;letter-spacing:-0.8px;font-family:'Liberation Mono'"><span style="color:#78c878">/* @import 'node_modules/weui-miniprogram/</span></div>
<div class="t" style="left:785px;top:217px;font-size:16px;letter-spacing:-0.8px;font-family:'Liberation Mono'"><span style="color:#78c878">weui-wxss/dist/style/weui.wxss'; */</span></div>
<div class="t" style="left:720px;width:40px;text-align:right;top:249px;font-size:16px;letter-spacing:-0.8px;font-family:'Liberation Mono';color:#464646">3</div>
<div class="t" style="left:785px;top:249px;font-size:16px;letter-spacing:-0.8px;font-family:'Liberation Mono'"><span style="color:#8fcaf5">view</span><span style="color:#e6e6e6">,</span></div>
<div class="t" style="left:720px;width:40px;text-align:right;top:281px;font-size:16px;letter-spacing:-0.8px;font-family:'Liberation Mono';color:#464646">4</div>
<div class="t" style="left:785px;top:281px;font-size:16px;letter-spacing:-0.8px;font-family:'Liberation Mono'"><span style="color:#8fcaf5">sroll-view</span><span style="color:#e6e6e6">,</span></div>
<div class="t" style="left:720px;width:40px;text-align:right;top:313px;font-size:16px;letter-spacing:-0.8px;font-family:'Liberation Mono';color:#464646">5</div>
<div class="t" style="left:785px;top:313px;font-size:16px;letter-spacing:-0.8px;font-family:'Liberation Mono'"><span style="color:#e6e6e6">swiper</span><span style="color:#e6e6e6">,</span></div>
<div class="t" style="left:720px;width:40px;text-align:right;top:345px;font-size:16px;letter-spacing:-0.8px;font-family:'Liberation Mono';color:#464646">6</div>
<div class="t" style="left:785px;top:345px;font-size:16px;letter-spacing:-0.8px;font-family:'Liberation Mono'"><span style="color:#e6e6e6">icon</span><span style="color:#e6e6e6">,</span></div>
<div class="t" style="left:720px;width:40px;text-align:right;top:377px;font-size:16px;letter-spacing:-0.8px;font-family:'Liberation Mono';color:#464646">7</div>
<div class="t" style="left:785px;top:377px;font-size:16px;letter-spacing:-0.8px;font-family:'Liberation Mono'"><span style="color:#8fcaf5">text</span><span style="color:#e6e6e6">,</span></div>
<div class="t" style="left:720px;width:40px;text-align:right;top:409px;font-size:16px;letter-spacing:-0.8px;font-family:'Liberation Mono';color:#464646">8</div>
<div class="t" style="left:785px;top:409px;font-size:16px;letter-spacing:-0.8px;font-family:'Liberation Mono'"><span style="color:#8fcaf5">progress</span><span style="color:#e6e6e6">,</span></div>
<div class="t" style="left:720px;width:40px;text-align:right;top:441px;font-size:16px;letter-spacing:-0.8px;font-family:'Liberation Mono';color:#464646">9</div>
<div class="t" style="left:785px;top:441px;font-size:16px;letter-spacing:-0.8px;font-family:'Liberation Mono'"><span style="color:#8fcaf5">button</span><span style="color:#e6e6e6">,</span></div>
<div class="t" style="left:720px;width:40px;text-align:right;top:473px;font-size:16px;letter-spacing:-0.8px;font-family:'Liberation Mono';color:#464646">10</div>
<div class="t" style="left:785px;top:473px;font-size:16px;letter-spacing:-0.8px;font-family:'Liberation Mono'"><span style="color:#e6e6e6">checkbox</span><span style="color:#e6e6e6">,</span></div>
<div class="t" style="left:720px;width:40px;text-align:right;top:505px;font-size:16px;letter-spacing:-0.8px;font-family:'Liberation Mono';color:#464646">11</div>
<div class="t" style="left:785px;top:505px;font-size:16px;letter-spacing:-0.8px;font-family:'Liberation Mono'"><span style="color:#8fcaf5">form</span><span style="color:#e6e6e6">,</span></div>
<div class="t" style="left:720px;width:40px;text-align:right;top:537px;font-size:16px;letter-spacing:-0.8px;font-family:'Liberation Mono';color:#464646">12</div>
<div class="t" style="left:785px;top:537px;font-size:16px;letter-spacing:-0.8px;font-family:'Liberation Mono'"><span style="color:#8fcaf5">input</span><span style="color:#e6e6e6">,</span></div>
<div class="t" style="left:720px;width:40px;text-align:right;top:569px;font-size:16px;letter-spacing:-0.8px;font-family:'Liberation Mono';color:#464646">13</div>
<div class="t" style="left:785px;top:569px;font-size:16px;letter-spacing:-0.8px;font-family:'Liberation Mono'"><span style="color:#8fcaf5">label</span><span style="color:#e6e6e6">,</span></div>
<div id="panel" class="a"></div>
<div class="a" style="left:700px;top:600px;width:550px;height:1px;background:#404040"></div>
<div class="t" style="left:721px;top:610px;font-size:11px;color:#bdbdbd">调试器</div>
<div class="a" style="left:762px;top:608px;width:34px;height:17px;border-radius:9px;background:#4a4a4a"></div>
<div class="t" style="left:766px;top:611px;font-size:11.5px;color:#f0f0f0">2, 14</div>
<div class="t" style="left:815px;top:610px;font-size:11px;color:#bdbdbd">问题</div>
<div class="t" style="left:857px;top:610px;font-size:11px;color:#f0f0f0">输出</div>
<div class="a" style="left:857px;top:628px;width:23px;height:1px;background:#e0e0e0"></div>
<div class="t" style="left:898px;top:610px;font-size:11px;color:#bdbdbd">终端</div>
<div class="a" style="left:943.0px;top:615px;width:3px;height:3px;border-radius:50%;background:#cfcfcf"></div><div class="a" style="left:948.5px;top:615px;width:3px;height:3px;border-radius:50%;background:#cfcfcf"></div><div class="a" style="left:954.0px;top:615px;width:3px;height:3px;border-radius:50%;background:#cfcfcf"></div>
<div class="a" style="left:972px;top:608px;width:110px;height:22px;background:#3a3a3a"></div>
<div class="t" style="left:981px;top:612px;font-size:13px;color:#eee">扩展</div>
<svg style="left:1064px;top:615px" width="11" height="7"><path d="M0.5 0.5L5.5 5.5L10.5 0.5" fill="none" stroke="#cfcfcf" stroke-width="1.3"/></svg>
<svg style="left:1099px;top:612px" width="15" height="13"><g stroke="#cfcfcf" stroke-width="1.2"><path d="M0 1H13M0 5H10M0 9H6M0 12.5H6"/><path d="M9 8.5L13 12.5M13 8.5L9 12.5"/></g></svg>
<svg style="left:1132px;top:611px" width="14" height="14"><g fill="none" stroke="#cfcfcf" stroke-width="1.3"><rect x="0.7" y="6" width="12.6" height="7.3"/><path d="M3.5 6V3.5Q3.5 0.7 6.5 0.7Q9.5 0.7 10 3"/></g></svg>
<svg style="left:1163px;top:611px" width="16" height="14"><g fill="none" stroke="#6a6a6a" stroke-width="1.3"><path d="M4 3.5H15.3V13.3H4Z"/><path d="M4 7H0.7V0.7H11V3.5"/></g></svg>
<svg style="left:1196px;top:614px" width="12" height="7"><path d="M0.5 6.5L6 1L11.5 6.5" fill="none" stroke="#cfcfcf" stroke-width="1.3"/></svg>
<svg style="left:1229px;top:612px" width="11" height="11"><path d="M0.5 0.5L10.5 10.5M10.5 0.5L0.5 10.5" stroke="#cfcfcf" stroke-width="1.3"/></svg>
<div class="a" style="left:721px;top:630px;width:2px;height:33px;background:#bbb"></div>
<div class="a" style="left:1235px;top:640px;width:1px;height:330px;background:#3c3c3c"></div>
<div id="stat" class="a"></div>
<div class="a" style="left:502px;top:955px;width:194px;height:45px;background:#353535;border-top:1px solid #3a3a3a"></div>
<svg style="left:509px;top:963px" width="5" height="7"><path d="M0 0L5 3.5L0 7Z" fill="#cfcfcf"/></svg>
<div class="t" style="left:521px;top:961px;font-size:11px;color:#d6d6d6;font-weight:bold">大纲</div>
<svg style="left:517px;top:980px" width="13" height="13"><g fill="none" stroke="#aaa" stroke-width="1.1"><circle cx="6.5" cy="6.5" r="5.8"/><path d="M4 4L9 9M9 4L4 9"/></g></svg>
<div class="t" style="left:533px;top:980px;font-size:12px;color:#aaa">0</div>
<svg style="left:544px;top:979px" width="14" height="13"><g fill="none" stroke="#aaa" stroke-width="1.1"><path d="M7 1L13 12H1Z"/><path d="M7 5V8.5M7 10V10.8"/></g></svg>
<div class="t" style="left:561px;top:980px;font-size:12px;color:#aaa">0</div>
<div class="t" style="left:1021px;top:981px;font-size:12px;color:#aaa">行 2，列 1</div>
<div class="t" style="left:1093px;top:981px;font-size:12px;color:#aaa">空格: 2</div>
<div class="t" style="left:1146px;top:981px;font-size:12px;letter-spacing:-0.3px;color:#aaa">UTF-8</div>
<div class="t" style="left:1194px;top:981px;font-size:12px;color:#aaa">LF</div>
<div class="t" style="left:1221px;top:981px;font-size:12px;letter-spacing:-0.8px;color:#aaa">CSS</div>
</body></html>
